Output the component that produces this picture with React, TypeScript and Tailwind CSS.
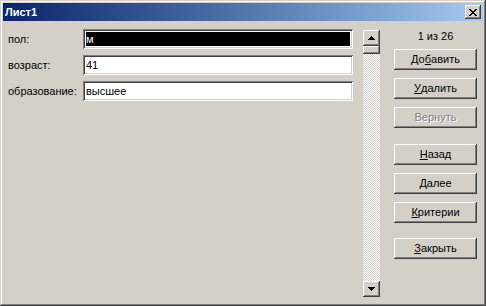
const raised =
  "shadow-[inset_-1px_-1px_#404040,inset_1px_1px_#ffffff,inset_-2px_-2px_#808080,inset_2px_2px_#d4d0c8]";
const sunken =
  "shadow-[inset_1px_1px_#808080,inset_-1px_-1px_#ffffff,inset_2px_2px_#404040,inset_-2px_-2px_#d4d0c8]";

const fields = [
  { label: "пол:", value: "м", selected: true },
  { label: "возраст:", value: "41", selected: false },
  { label: "образование:", value: "высшее", selected: false },
];

function CloseGlyph() {
  // 8x7 pixel X, classic style
  const rows = [
    "XX....XX",
    ".XX..XX.",
    "..XXXX..",
    "...XX...",
    "..XXXX..",
    ".XX..XX.",
    "XX....XX",
  ];
  return (
    <svg width="8" height="7" shapeRendering="crispEdges">
      {rows.map((r, y) =>
        r.split("").map((c, x) =>
          c === "X" ? <rect key={`${x}-${y}`} x={x} y={y} width="1" height="1" fill="#000" /> : null
        )
      )}
    </svg>
  );
}

function Arrow({ down }: { down?: boolean }) {
  return (
    <svg width="7" height="4" shapeRendering="crispEdges">
      {[0, 1, 2, 3].map((i) => {
        const row = down ? 3 - i : i;
        return <rect key={i} x={3 - row} y={i} width={row * 2 + 1} height="1" fill="#000" />;
      })}
    </svg>
  );
}

function Btn({
  children,
  disabled,
  className = "",
}: {
  children: React.ReactNode;
  disabled?: boolean;
  className?: string;
}) {
  return (
    <div
      className={`flex h-[21px] w-[83px] items-center justify-center bg-[#d4d0c8] ${raised} ${
        disabled ? "text-[#808080] [text-shadow:1px_1px_0_#ffffff]" : "text-black"
      } ${className}`}
    >
      {children}
    </div>
  );
}

export default function App() {
  return (
    <div
      className={`flex h-[306px] w-[486px] flex-col bg-[#d4d0c8] p-[3px] font-['Liberation_Sans',Arial,sans-serif] text-[11px] leading-none text-black shadow-[inset_-1px_-1px_#404040,inset_1px_1px_#d4d0c8,inset_-2px_-2px_#808080,inset_2px_2px_#ffffff]`}
    >
      {/* title bar */}
      <div className="flex h-[18px] items-center justify-between bg-linear-to-r from-[#0a246a] to-[#a6caf0] pl-[2px] pr-[2px]">
        <span className="text-[11px] font-bold text-white">Лист1</span>
        <div className={`flex h-[14px] w-[16px] items-center justify-center bg-[#d4d0c8] ${raised}`}>
          <CloseGlyph />
        </div>
      </div>

      {/* body */}
      <div className="flex flex-1 items-start">
        <div className="mt-[8px] flex flex-col gap-[6px]">
          {fields.map((f) => (
            <div key={f.label} className="flex h-[20px] items-center">
              <div className="w-[80px] pl-[5px]">{f.label}</div>
              <div className={`h-[20px] w-[270px] bg-white p-[3px] ${sunken}`}>
                <div
                  className={`flex h-full items-center pl-[0px] ${
                    f.selected ? "bg-black text-white" : "text-black"
                  }`}
                >
                  {f.value}
                </div>
              </div>
            </div>
          ))}
        </div>

        {/* scrollbar */}
        <div className="ml-[10px] mt-[9px] flex h-[267px] w-[17px] flex-col bg-[repeating-conic-gradient(#d4d0c8_0_25%,#ffffff_0_50%)] bg-[length:2px_2px]">
          <div className={`flex h-[16px] items-center justify-center bg-[#d4d0c8] ${raised}`}>
            <Arrow />
          </div>
          <div className={`h-[8px] bg-[#d4d0c8] ${raised}`} />
          <div className="flex-1" />
          <div className={`flex h-[16px] items-center justify-center bg-[#d4d0c8] ${raised}`}>
            <Arrow down />
          </div>
        </div>

        {/* buttons */}
        <div className="ml-[14px] mt-[5px] flex w-[83px] flex-col">
          <div className="flex h-[20px] items-center justify-center">1 из 26</div>
          <Btn className="mt-[3px]">
            До<u>б</u>авить
          </Btn>
          <Btn className="mt-[8px]">
            <u>У</u>далить
          </Btn>
          <Btn className="mt-[8px]" disabled>
            Вернуть
          </Btn>
          <Btn className="mt-[16px]">
            <u>Н</u>азад
          </Btn>
          <Btn className="mt-[8px]">
            <u>Д</u>алее
          </Btn>
          <Btn className="mt-[8px]">
            <u>К</u>ритерии
          </Btn>
          <Btn className="mt-[15px]">
            <u>З</u>акрыть
          </Btn>
        </div>
      </div>
    </div>
  );
}
